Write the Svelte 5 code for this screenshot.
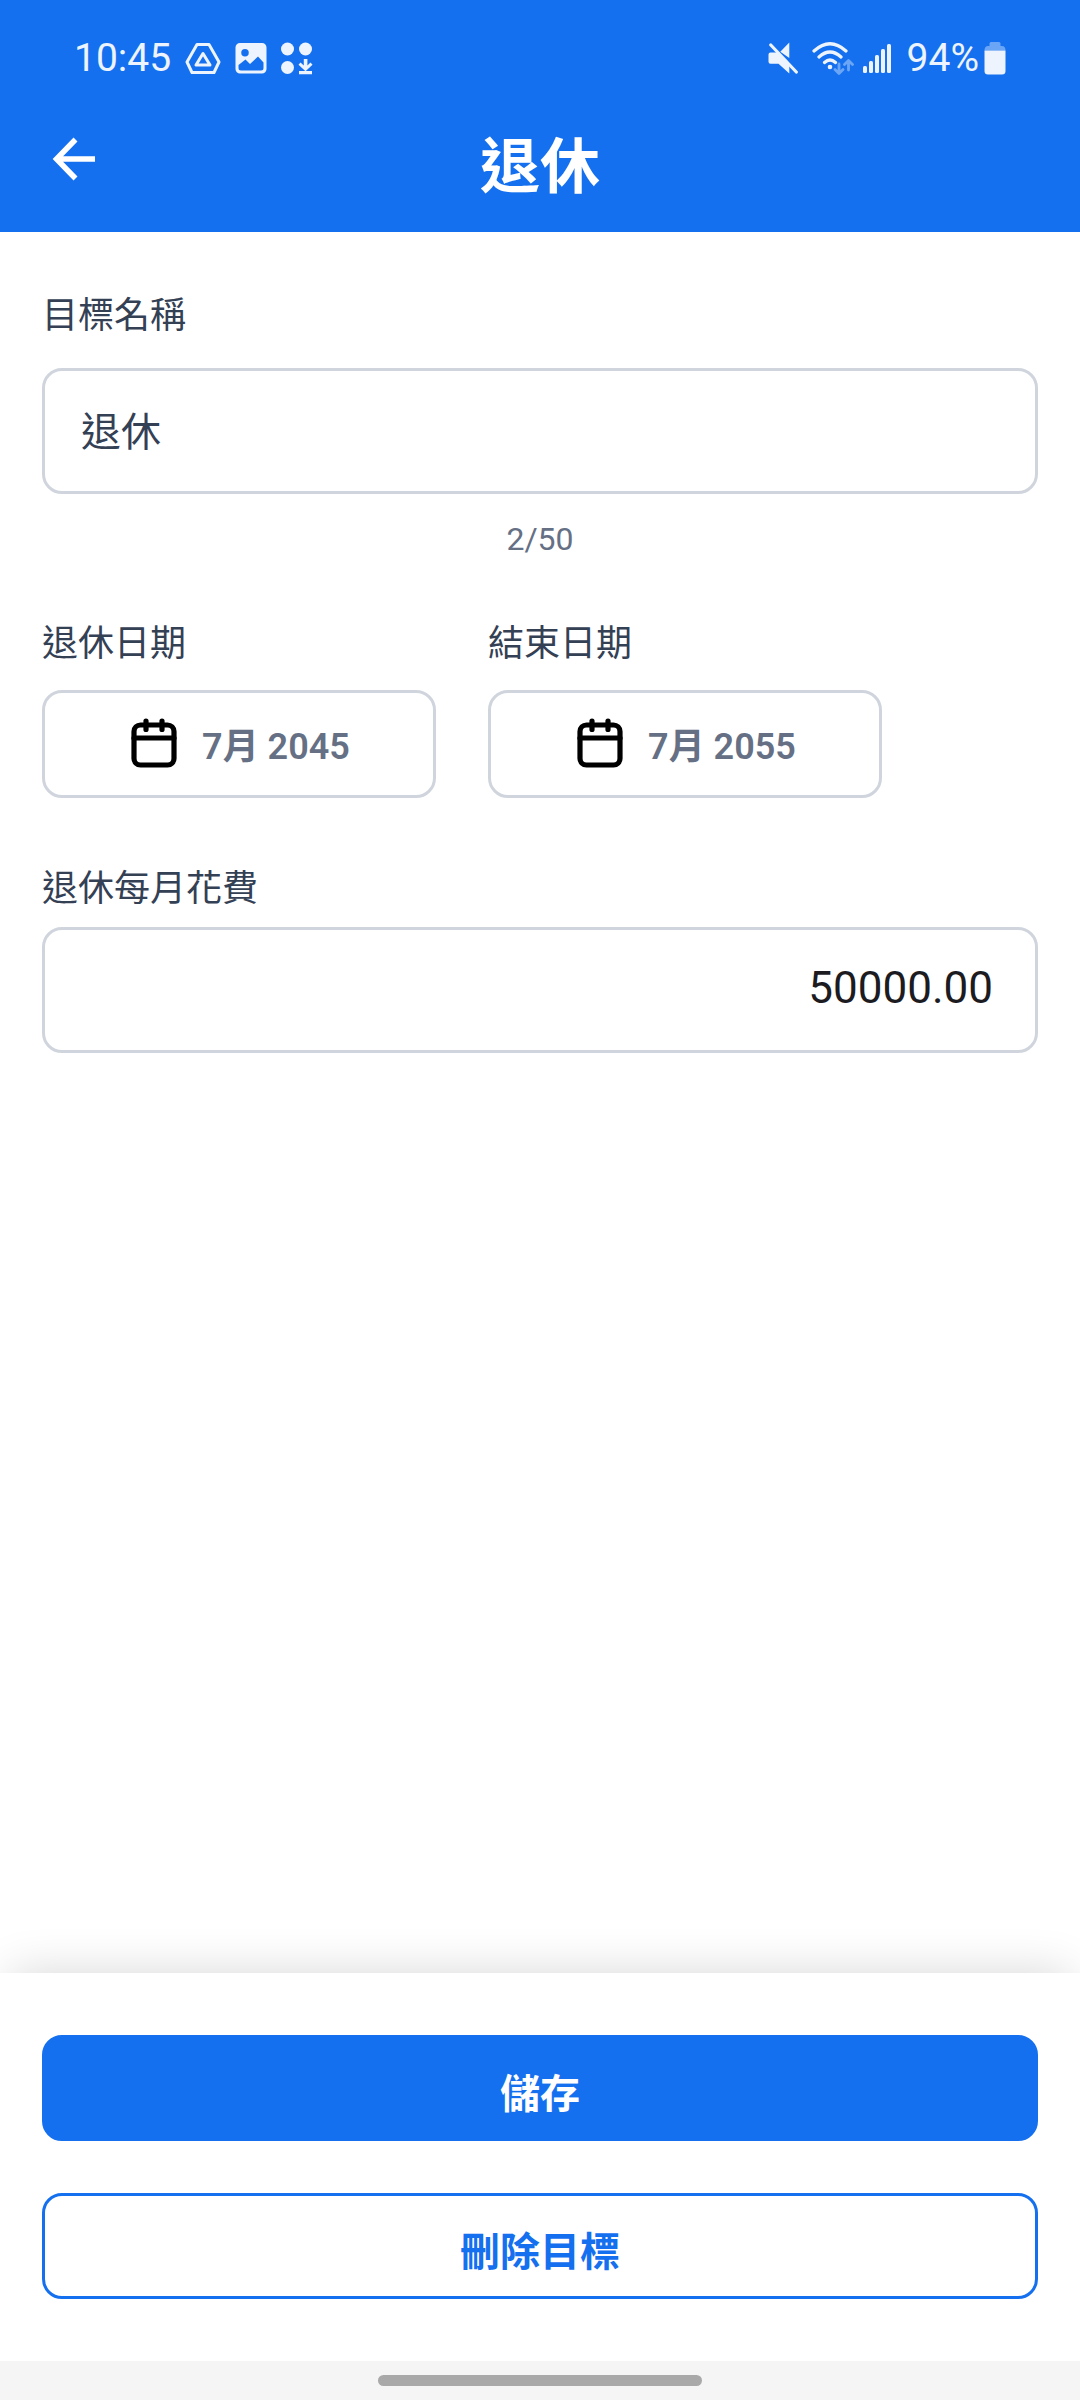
<script>
	let name = $state("退休");
	let amount = $state("50000.00");

	const maxLength = 50;
	const dates = [
		{ id: "start-date", label: "退休日期", value: "7月 2045" },
		{ id: "end-date", label: "結束日期", value: "7月 2055" }
	];
</script>

<div class="screen">
	<header>
		<div class="status-bar">
			<span class="time">10:45</span>
			<div class="notifications">
				<svg width="36" height="34" viewBox="0 0 36 34" fill="none" stroke="currentColor" stroke-width="3" stroke-linejoin="round">
					<path d="M12 3.500h12L34 21l-5 10.500H7L2 21z" />
					<path d="M18 12.500l-7 11.500h14z" />
				</svg>
				<svg width="32" height="34" viewBox="0 0 32 34">
					<path fill="currentColor" fill-rule="evenodd" d="M5 2h22a4.500 4.500 0 0 1 4.500 4.500v21.500a4.500 4.500 0 0 1-4.500 4.500H5A4.500 4.500 0 0 1 .5 28V6.500A4.500 4.500 0 0 1 5 2zM10 8a3.500 3.500 0 1 0 0 7.500A3.500 3.500 0 0 0 10 8zM3.500 24v3q0 2.500 2.500 2.500h20q2.500 0 2.500-2.500v-5.500L23 15.500l-8 7.500-4.500-4.500z" />
				</svg>
				<svg width="32" height="34" viewBox="0 0 32 34" fill="currentColor">
					<circle cx="6.500" cy="8" r="6.500" />
					<circle cx="24.500" cy="8" r="6.500" />
					<circle cx="6.500" cy="26.500" r="6.500" />
					<path d="M22.800 18h3.600v6.500l3.100-3 2 2.300-7 6.500-7-6.500 2-2.300 3.300 3zM18 30h13v3.300H18z" />
				</svg>
			</div>
			<div class="system">
				<svg width="30" height="34" viewBox="0 0 30 34" fill="currentColor">
					<path d="M21.300 1.500V17l-9-6.300zM2.500 11.500h6L21.300 24v8.500L10.500 22.800h-8a2 2 0 0 1-2-2v-7.300a2 2 0 0 1 2-2z" />
					<path d="M2.800 4l25.500 27" stroke="currentColor" stroke-width="3.200" stroke-linecap="round" />
				</svg>
				<svg class="wifi" width="42" height="34" viewBox="0 0 42 34" fill="none" stroke="currentColor" stroke-width="3.200" stroke-linecap="round">
					<path d="M2 10q16-14.500 32 0M7 16q11-10 22 0M12.500 21.500q5.500-5 11 0" />
					<circle cx="18" cy="26" r="2.300" fill="currentColor" stroke="none" />
					<g opacity="0.4" stroke-width="2.800" stroke-linejoin="round">
						<path d="M27 23v9M23 28.500l4 4 4-4M36.500 29v-9M32.500 23.500l4-4 4 4" />
					</g>
				</svg>
				<svg class="signal" width="28" height="34" viewBox="0 0 28 34" fill="currentColor">
					<rect x="0" y="25" width="4" height="7" rx="1.500" />
					<rect x="6" y="20" width="4" height="12" rx="1.500" />
					<rect x="12" y="14" width="4" height="18" rx="1.500" />
					<rect x="18" y="8" width="4" height="24" rx="1.500" />
					<rect x="24" y="3" width="4" height="29" rx="1.500" />
				</svg>
				<span>94%</span>
				<svg class="battery" width="22" height="34" viewBox="0 0 22 34" fill="currentColor">
					<path opacity="0.4" d="M7 1h8q1.500 0 1.500 1.500V5H18q3.500 0 3.500 4.500H.5Q.5 5 4 5h1.500V2.500Q5.500 1 7 1z" />
					<path d="M.5 9.500h21V30q0 3.500-3.500 3.500H4Q.5 33.500.5 30z" />
				</svg>
			</div>
		</div>
		<div class="title-bar">
			<button class="back" aria-label="返回">
				<svg width="44" height="44" viewBox="0 0 44 44" fill="none" stroke="currentColor" stroke-width="5.500">
					<path d="M23.500 2.500L4.500 22l19 19.500M4 22h39" />
				</svg>
			</button>
			<h1>退休</h1>
		</div>
	</header>

	<main>
		<div class="field name-field">
			<label for="goal-name">目標名稱</label>
			<input id="goal-name" type="text" maxlength={maxLength} bind:value={name} />
			<p class="counter">{name.length}/{maxLength}</p>
		</div>

		<div class="dates">
			{#each dates as date (date.id)}
				<div class="field date-field">
					<label for={date.id}>{date.label}</label>
					<button id={date.id} class="date-button">
						<svg width="64" height="64" viewBox="0 0 64 64" fill="none" stroke="#000" stroke-width="5.200" stroke-linecap="round">
							<rect x="12" y="14" width="40" height="40" rx="6.500" />
							<path d="M12 27h40M24 10v8.500M40 10v8.500" />
						</svg>
						<span>{date.value}</span>
					</button>
				</div>
			{/each}
		</div>

		<div class="field amount-field">
			<label for="monthly-cost">退休每月花費</label>
			<input id="monthly-cost" class="amount" type="text" inputmode="decimal" bind:value={amount} />
		</div>
	</main>

	<footer>
		<button class="action primary">儲存</button>
		<button class="action outline">刪除目標</button>
	</footer>
	<div class="gesture-bar">
		<div class="handle"></div>
	</div>
</div>

<style>
	:global(body) {
		margin: 0;
		background: #fff;
	}

	.screen {
		display: flex;
		flex-direction: column;
		min-height: 100vh;
		font-family: Roboto, "Noto Sans CJK TC", sans-serif;
		color: #344054;
	}

	svg {
		display: block;
		flex-shrink: 0;
	}

	button,
	input {
		box-sizing: border-box;
		margin: 0;
		font-family: inherit;
	}

	button {
		cursor: pointer;
	}

	header {
		background: #1570ef;
		color: #fff;
		padding-bottom: 12px;
	}

	.status-bar {
		display: flex;
		align-items: center;
		height: 116px;
		padding: 0 74px;
		font-size: 39px;
		line-height: 48px;
		color: #edf4fe;
	}

	.notifications {
		display: flex;
		gap: 14px;
		margin-left: 14px;
	}

	.system {
		display: flex;
		align-items: center;
		margin-left: auto;
	}

	.wifi {
		margin-left: 14px;
	}

	.signal {
		margin: 0 16px 0 9px;
	}

	.battery {
		margin-left: 5px;
	}

	.title-bar {
		display: grid;
		grid-template-columns: 1fr auto 1fr;
		align-items: center;
		height: 104px;
		padding: 0 52px;
	}

	.back {
		align-self: start;
		justify-self: start;
		height: 86px;
		padding: 0;
		border: 0;
		background: none;
		color: inherit;
	}

	h1 {
		margin: 0;
		font-size: 60px;
		font-weight: 700;
		line-height: 84px;
	}

	main {
		flex: 1;
		padding: 62px 42px;
	}

	.field {
		display: flex;
		flex-direction: column;
	}

	.name-field {
		gap: 30px;
	}

	.date-field {
		gap: 24px;
	}

	.amount-field {
		gap: 16px;
	}

	label {
		font-size: 36px;
		line-height: 44px;
	}

	input,
	.date-button {
		border: 3px solid #d0d5dd;
		border-radius: 20px;
		background: #fff;
	}

	input {
		width: 100%;
		height: 126px;
		padding: 0 42px 4px 36px;
		font-size: 40px;
		color: #344054;
	}

	.amount {
		font-size: 44px;
		text-align: right;
		color: #1c1b1f;
	}

	.counter {
		margin: -5px 0 0;
		font-size: 32px;
		line-height: 40px;
		text-align: center;
		color: #667085;
	}

	.dates {
		display: grid;
		grid-template-columns: repeat(2, minmax(0, 394px));
		gap: 52px;
		margin: 63px 0 69px;
	}

	.date-button {
		display: flex;
		align-items: center;
		justify-content: center;
		gap: 16px;
		height: 108px;
		padding: 0 6px 2px 0;
		font-size: 36px;
		font-weight: 600;
		color: #667085;
	}

	footer {
		display: flex;
		flex-direction: column;
		gap: 52px;
		padding: 62px 42px;
		background: #fff;
		box-shadow: 0 -10px 44px -10px rgb(0 0 0 / 0.16);
	}

	.action {
		height: 106px;
		padding: 5px 0 0;
		border: 3px solid #1570ef;
		border-radius: 20px;
		font-size: 40px;
		font-weight: 700;
	}

	.primary {
		background: #1570ef;
		color: #fff;
	}

	.outline {
		background: #fff;
		color: #1570ef;
	}

	.gesture-bar {
		display: flex;
		align-items: center;
		justify-content: center;
		height: 39px;
		background: #f5f5f5;
	}

	.handle {
		width: 30%;
		height: 11px;
		border-radius: 6px;
		background: #a9a9a9;
	}
</style>
